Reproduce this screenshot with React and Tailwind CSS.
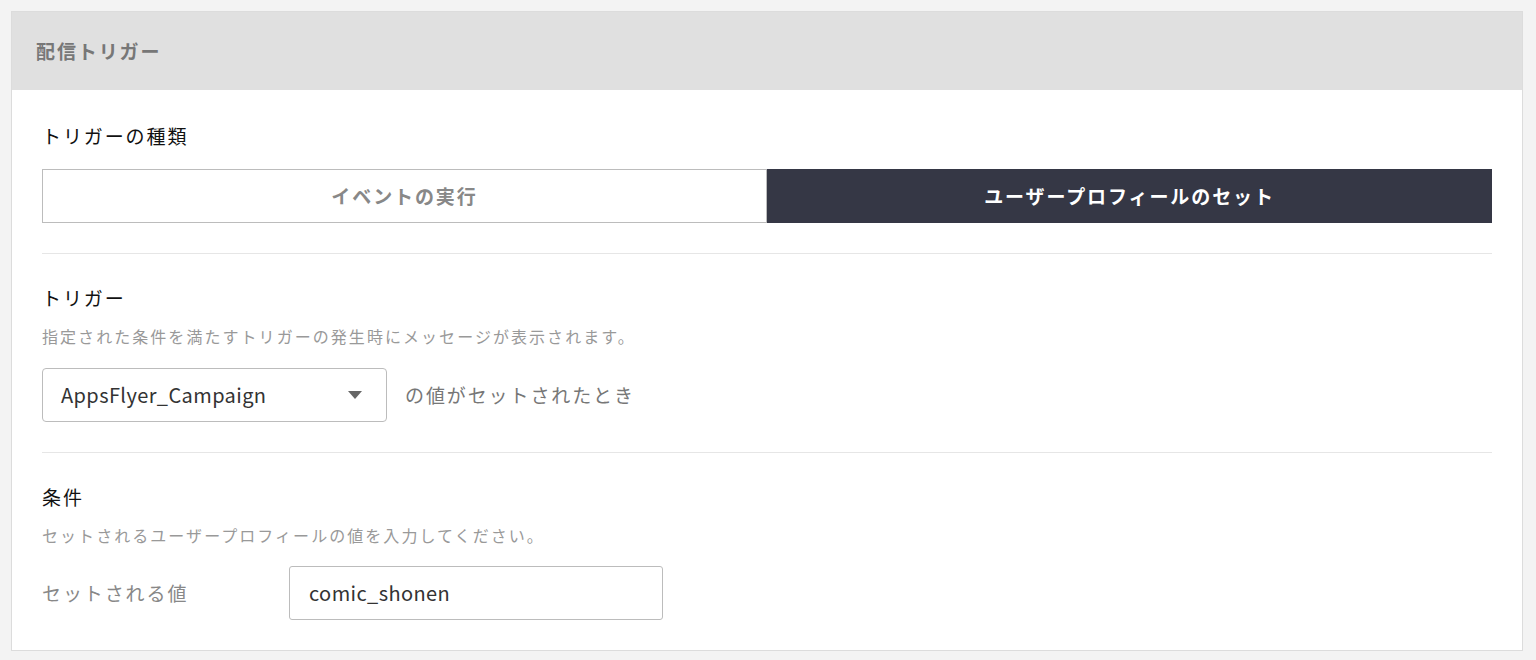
const font = { fontFamily: '"Noto Sans CJK JP", "Noto Sans", sans-serif' }

function Section({ title, desc, children }) {
  return (
    <div>
      <h3 className="text-[19px] leading-[28px] tracking-[0.1em] text-[#111]">{title}</h3>
      {desc && (
        <p className="mt-[12px] text-[16px] leading-[24px] tracking-[2.05px] text-[#999]">{desc}</p>
      )}
      {children}
    </div>
  )
}

export default function App() {
  return (
    <div className="min-h-[660px] bg-[#f3f3f3] pt-[11px] pb-[10px]" style={font}>
      <div className="ml-[11px] w-[1512px] border border-[#dcdcdc] bg-white">
        {/* Header */}
        <div className="flex h-[78px] items-center bg-[#e0e0e0] px-[24px]">
          <h2 className="text-[19px] font-bold tracking-[0.1em] text-[#777]">配信トリガー</h2>
        </div>

        <div className="px-[30px] pt-[32px] pb-[30px]">
          <Section title="トリガーの種類">
            <div className="mt-[19px] grid h-[54px] grid-cols-2">
              <button className="border border-[#bcbcbc] text-[19px] font-bold tracking-[0.1em] text-[#888]">
                イベントの実行
              </button>
              <button className="bg-[#353745] text-[19px] font-bold tracking-[0.1em] text-white">
                ユーザープロフィールのセット
              </button>
            </div>
          </Section>

          <div className="my-[30px] h-px bg-[#e6e6e6]" />

          <Section title="トリガー" desc="指定された条件を満たすトリガーの発生時にメッセージが表示されます。">
            <div className="mt-[20px] flex items-center gap-[18px]">
              <div className="flex h-[54px] w-[345px] items-center justify-between rounded-[4px] border border-[#bcbcbc] pl-[18px] pr-[18px]">
                <span className="text-[20px] tracking-[0.02em] text-[#333]">AppsFlyer_Campaign</span>
                <svg width="14" height="8" viewBox="0 0 14 8" className="mr-[6px]">
                  <path d="M0 0 L14 0 L7 8 Z" fill="#666" />
                </svg>
              </div>
              <span className="text-[19px] tracking-[0.1em] text-[#777]">の値がセットされたとき</span>
            </div>
          </Section>

          <div className="my-[30px] h-px bg-[#e6e6e6]" />

          <Section title="条件" desc="セットされるユーザープロフィールの値を入力してください。">
            <div className="mt-[19px] flex items-center">
              <span className="w-[247px] text-[19px] tracking-[0.1em] text-[#888]">セットされる値</span>
              <div className="flex h-[54px] w-[374px] items-center rounded-[3px] border border-[#bcbcbc] px-[19px]">
                <span className="text-[20px] tracking-[0.02em] text-[#333]">comic_shonen</span>
              </div>
            </div>
          </Section>
        </div>
      </div>
    </div>
  )
}
